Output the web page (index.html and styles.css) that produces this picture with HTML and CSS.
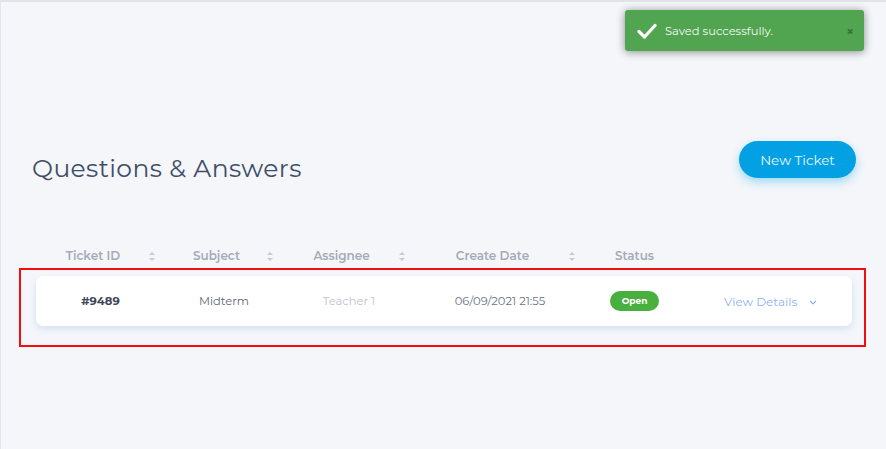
FILE: index.html
```html
<!DOCTYPE html>
<html>
<head>
<meta charset="utf-8">
<link rel="stylesheet" href="styles.css">
</head>
<body>
<div class="page">
  <div class="toast">
    <svg class="toast-check" width="20" height="16" viewBox="0 0 20 16"><path d="M2 8.5 L7.5 14 L18 2.5" fill="none" stroke="#fff" stroke-width="3.2" stroke-linecap="round" stroke-linejoin="round"/></svg>
    <span class="toast-text">Saved successfully.</span>
    <span class="toast-close">×</span>
  </div>

  <div class="head">
    <h1 class="title">Questions &amp; Answers</h1>
    <button class="btn-new">New Ticket</button>
  </div>

  <div class="table">
    <div class="thead">
      <div class="th sortable">Ticket ID<span class="sort"></span></div>
      <div class="th sortable">Subject<span class="sort"></span></div>
      <div class="th sortable">Assignee<span class="sort"></span></div>
      <div class="th sortable">Create Date<span class="sort"></span></div>
      <div class="th">Status</div>
      <div class="th"></div>
    </div>
    <div class="highlight">
      <div class="row">
        <div class="td id">#9489</div>
        <div class="td subj">Midterm</div>
        <div class="td assignee">Teacher 1</div>
        <div class="td date">06/09/2021 21:55</div>
        <div class="td"><span class="badge">Open</span></div>
        <div class="td details">View Details
          <svg class="chev" width="8" height="5" viewBox="0 0 8 5"><path d="M1 1 L4 4 L7 1" fill="none" stroke="#8fb4ee" stroke-width="1.2"/></svg>
        </div>
      </div>
    </div>
  </div>
</div>
</body>
</html>
```

FILE: styles.css
```css
* { box-sizing: border-box; }
html, body { margin: 0; padding: 0; }
body {
  background: #f4f6fa;
  font-family: "Montserrat", "Open Sans", "Noto Sans", sans-serif;
  width: 886px;
  height: 449px;
  overflow: hidden;
}
.page {
  position: relative;
  height: 449px;
  border-top: 2px solid #e2e3e6;
  border-left: 1px solid #dfe7f3;
}
.toast {
  position: absolute;
  top: 8px;
  right: 22px;
  width: 239px;
  height: 41px;
  background: #51a551;
  border-radius: 3px;
  box-shadow: 0 1px 8px rgba(0,0,0,0.45);
  display: flex;
  align-items: center;
  padding: 0 10px 0 12px;
  color: #f2f8f1;
}
.toast-check { margin-right: 8px; }
.toast-text { font-size: 11.5px; flex: 1; }
.toast-close { color: #2f5a2f; font-size: 13px; font-weight: 700; opacity: 0.7; }

.head {
  display: flex;
  justify-content: space-between;
  align-items: flex-start;
  padding: 139px 30px 0 31px;
}
.title {
  margin: 11px 0 0;
  font-weight: 400;
  font-size: 25px;
  line-height: 32px;
  color: #3f4e66;
  letter-spacing: 0.4px;
}
.btn-new {
  width: 117px;
  height: 37px;
  border: none;
  border-radius: 19px;
  background: #03a1e4;
  color: #eaf6fd;
  font-family: inherit;
  font-size: 13.5px;
  box-shadow: 0 4px 10px rgba(3,161,228,0.35);
  padding: 0;
}

.table { margin-top: 62px; }
.thead, .row {
  display: grid;
  grid-template-columns: 129px 118px 132px 170px 99px 167px;
}
.thead { padding-left: 35px; height: 22px; }
.th {
  position: relative;
  text-align: center;
  font-size: 12px;
  font-weight: 600;
  color: #a5abb6;
  padding-right: 15px;
  line-height: 20px;
}
.th:nth-child(5) { padding-right: 0; }
.sort {
  position: absolute;
  right: 10px;
  top: 6px;
  width: 6px;
  height: 9px;
}
.sort::before, .sort::after {
  content: "";
  position: absolute;
  left: 0;
  border-left: 3px solid transparent;
  border-right: 3px solid transparent;
}
.sort::before { top: 0; border-bottom: 3px solid #c6cad2; }
.sort::after { bottom: 0; border-top: 3px solid #c6cad2; }

.highlight {
  margin: 0 20px 0 18px;
  border: 2px solid #f40d0d;
  padding: 6px 12px 19px 15px;
}
.row {
  height: 50px;
  background: #fff;
  border-radius: 7px;
  box-shadow: 0 3px 6px rgba(160,185,220,0.35);
  align-items: center;
}
.td {
  text-align: center;
  font-size: 11.5px;
  color: #4f5a6e;
}
.id { font-weight: 700; color: #3d4556; }
.subj { color: #5d6677; }
.assignee { color: #c0c4cc; }
.date { color: #6a7487; }
.badge {
  display: inline-block;
  width: 49px;
  height: 20px;
  line-height: 20px;
  border-radius: 10px;
  background: #49b03f;
  color: #fff;
  font-size: 9px;
  font-weight: 700;
}
.details {
  text-align: left;
  padding-left: 40px;
  color: #8fb4ee;
  font-size: 12px;
}
.chev { margin-left: 8px; vertical-align: middle; }
```
